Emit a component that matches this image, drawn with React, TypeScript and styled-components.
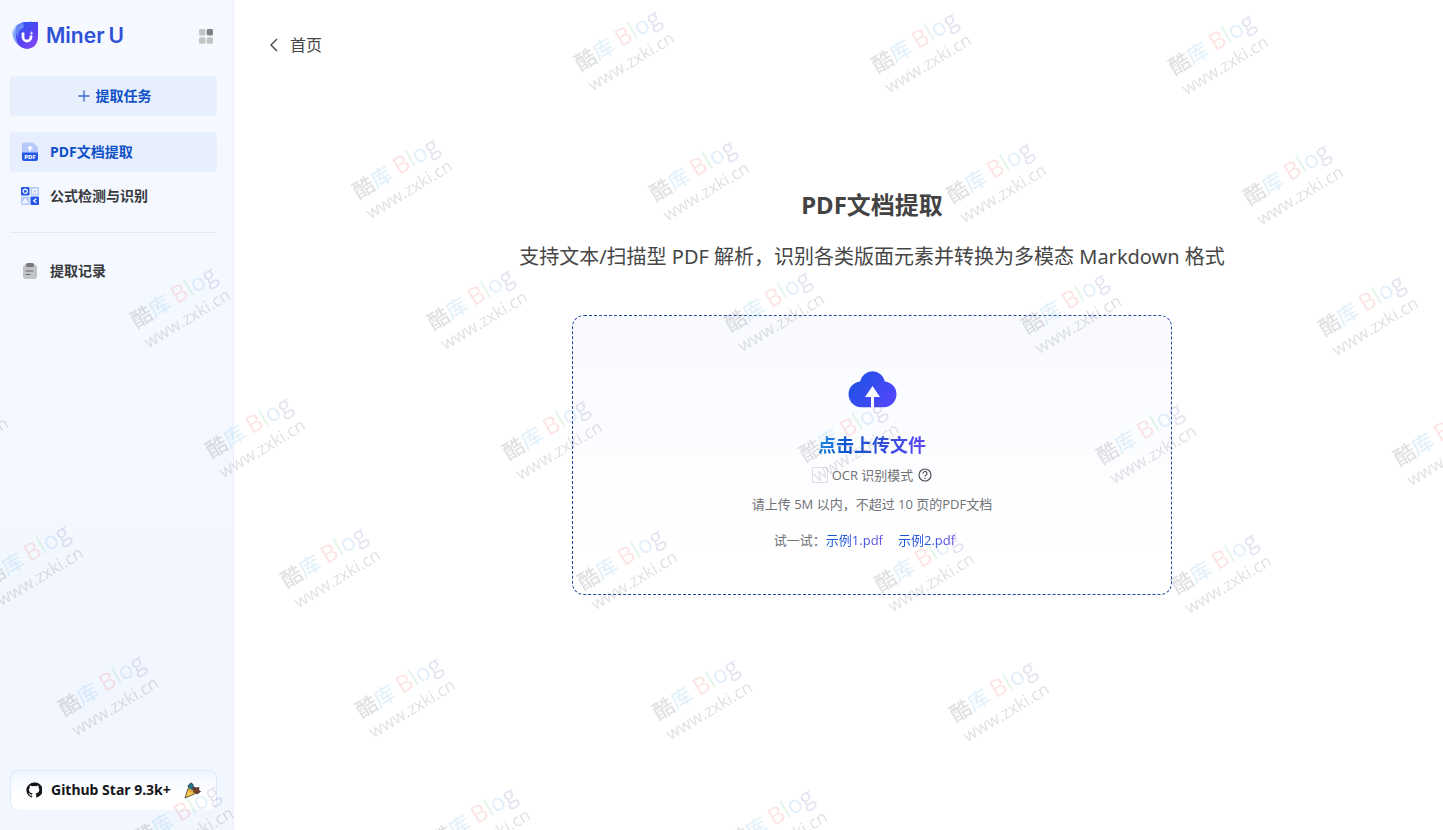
import React from "react";
import styled, { createGlobalStyle, css } from "styled-components";

const GlobalStyle = createGlobalStyle`
  *, *::before, *::after { box-sizing: border-box; }
  body {
    margin: 0;
    background: #fff;
    color: #464646;
    font-family: "Noto Sans", "Noto Sans CJK SC", sans-serif;
    font-size: 14px;
    line-height: 20px;
  }
  button { font: inherit; border: 0; background: none; padding: 0; cursor: pointer; }
  a { text-decoration: none; }
`;

const Page = styled.div`
  position: relative;
  display: flex;
  min-height: 100vh;
  overflow: hidden;
`;

const Sidebar = styled.aside`
  flex: 0 0 234px;
  display: flex;
  flex-direction: column;
  padding: 16px 16px 20px 10px;
  border-right: 1px solid #e9eef7;
  background: linear-gradient(180deg, #f6f9ff 0%, #f4f9ff 45%, #f1f6ff 100%);
`;

const Brand = styled.header`
  display: flex;
  align-items: center;
  height: 40px;
  margin-bottom: 20px;
  padding: 0 2px;
`;

const BrandName = styled.span`
  display: flex;
  flex: 1;
  gap: 4px;
  margin-left: 7px;
  font-family: Inter, "Noto Sans", sans-serif;
  font-size: 21px;
  line-height: 30px;
  font-weight: 600;
  color: #2f50d8;
`;

const GridButton = styled.button`
  display: flex;
  width: 18px;
  height: 18px;
  align-items: center;
  justify-content: center;
`;

const NewTask = styled.button`
  display: flex;
  align-items: center;
  justify-content: center;
  gap: 6px;
  height: 40px;
  margin-bottom: 16px;
  padding-left: 2px;
  border-radius: 4px;
  background: #e8effc;
  color: #1151c8;
  font-weight: 700;
`;

const Nav = styled.nav`
  display: flex;
  flex-direction: column;
  gap: 4px;
`;

const NavItem = styled.a<{ $active?: boolean }>`
  display: flex;
  align-items: center;
  gap: 10px;
  height: 40px;
  padding: 0 10px;
  border-radius: 4px;
  color: #383a3e;
  font-weight: 700;
  ${(p) =>
    p.$active &&
    css`
      background: #e7eefd;
      color: #1151c8;
    `}
`;

const Divider = styled.hr`
  width: 100%;
  margin: 16px 0 18px;
  border: 0;
  border-top: 1px solid #e2e8f5;
`;

const GithubLink = styled.a`
  display: flex;
  align-items: center;
  height: 40px;
  margin-top: auto;
  padding: 0 15px;
  border: 1px solid #dbe9fb;
  border-bottom-color: #f8fbff;
  border-radius: 8px;
  background: linear-gradient(180deg, #f0f6ff 0%, #fff 60%);
  color: #14161a;
  font-weight: 700;
`;

const GithubText = styled.span`
  flex: 1;
  margin-left: 9px;
  white-space: nowrap;
`;

const Main = styled.main`
  flex: 1;
  min-width: 0;
  padding: 32px 0 0 33px;
`;

const BackLink = styled.a`
  display: inline-flex;
  align-items: center;
  gap: 8px;
  height: 26px;
  color: #464646;
  font-size: 16px;
`;

const Content = styled.section`
  display: flex;
  flex-direction: column;
  align-items: center;
  margin-left: 34px;
  padding-top: 129px;
`;

const Title = styled.h1`
  margin: 0 0 20px;
  color: #434343;
  font-size: 24px;
  line-height: 36px;
  font-weight: 700;
`;

const Subtitle = styled.p`
  margin: 0 0 44px;
  color: #464646;
  font-size: 20px;
  line-height: 28px;
`;

const DropZone = styled.div`
  display: flex;
  flex-direction: column;
  align-items: center;
  width: 600px;
  max-width: 100%;
  height: 280px;
  padding-top: 54px;
  border: 1px dashed #1f4c9f;
  border-radius: 12px;
  background: linear-gradient(180deg, #f8faff 0%, #fff 85%);
  font-family: "Open Sans", "Noto Sans CJK SC", sans-serif;
  font-size: 13px;
  color: #717275;
`;

const UploadButton = styled.button`
  display: flex;
  flex-direction: column;
  align-items: center;
  gap: 22px;
`;

const UploadLabel = styled.span`
  font-size: 18px;
  line-height: 28px;
  font-weight: 700;
  background: linear-gradient(90deg, #1a80e0 0%, #0d53cf 28%, #2a4fdc 55%, #6048f5 100%);
  background-clip: text;
  color: transparent;
`;

const OcrRow = styled.div`
  display: flex;
  align-items: center;
  gap: 5px;
  height: 32px;
  margin-bottom: 3px;
`;

const OcrLabel = styled.label`
  display: flex;
  align-items: center;
  gap: 4px;
`;

const Checkbox = styled.input`
  appearance: none;
  width: 16px;
  height: 16px;
  margin: 0;
  border: 1px solid #dcdee3;
  border-radius: 1px;
  background: transparent;
`;

const HelpButton = styled.button`
  display: flex;
`;

const Hint = styled.p`
  margin: 0 0 16px;
`;

const Samples = styled.div`
  display: flex;
  align-items: center;
`;

const SampleLink = styled.a`
  margin-right: 15px;
  background: linear-gradient(90deg, #0d5bd4 0%, #2b50da 50%, #6a4ce8 100%);
  background-clip: text;
  color: transparent;
`;

const WatermarkLayer = styled.div`
  position: absolute;
  inset: 0;
  overflow: hidden;
  pointer-events: none;
  user-select: none;
`;

const Stamp = styled.div`
  position: absolute;
  width: max-content;
  transform: translate(-50%, -50%) rotate(-31deg);
  opacity: 0.18;
  color: #555a60;
  font-family: "Open Sans", "Noto Sans CJK SC", sans-serif;
  white-space: nowrap;
`;

const StampName = styled.div`
  display: flex;
  align-items: baseline;
  font-size: 21px;
  line-height: 30px;
  font-weight: 500;
`;

const StampLatin = styled.span`
  margin-left: 5px;
  font-size: 24px;
`;

const StampSite = styled.div`
  font-size: 17px;
  line-height: 20px;
`;

const Ink = styled.span<{ $color: string }>`
  color: ${(p) => p.$color};
`;

const LogoMark = () => (
  <svg width="27" height="30" viewBox="0 0 27 30" aria-hidden="true">
    <defs>
      <linearGradient id="logo" x1="4" y1="4" x2="24" y2="28" gradientUnits="userSpaceOnUse">
        <stop offset="0" stopColor="#2f5cf0" />
        <stop offset="0.5" stopColor="#5343f4" />
        <stop offset="1" stopColor="#8b49fa" />
      </linearGradient>
    </defs>
    <path d="M0 11 4 4 12 2 20 0v14q0 9-7 12Q2 26 0 11Z" fill="#a9c4fb" />
    <path d="M1 14 5 4 20 1l3 4-3 19-7 3Q3 24 1 14Z" fill="#7396f7" opacity=".8" />
    <path d="M4 9q1-7 8-8h14v14q0 12-11 13Q4 27 4 14Z" fill="url(#logo)" />
    <path d="M4 9Q5 3 11 2l1 4-5 4-1 6Q4 14 4 9Z" fill="#7ba0fa" opacity=".7" />
    <path d="M11 11.500v4.500a4 4 0 0 0 8 0v-1.500" fill="none" stroke="#fff" strokeWidth="2.800" />
    <path d="m19.500 10 .7 1.500 1.500.7-1.500.7-.7 1.500-.7-1.500-1.500-.7 1.500-.7Z" fill="#d9ceff" />
  </svg>
);

const GridIcon = () => (
  <svg width="14" height="15" viewBox="0 0 14 15" aria-hidden="true">
    <rect width="6.500" height="6.500" rx="1.500" fill="#c3c4c6" />
    <rect x="7.700" width="6.300" height="6.500" rx="1.500" fill="#7e8084" />
    <rect y="8.300" width="6.500" height="6.500" rx="1.500" fill="#c3c4c6" />
    <rect x="7.700" y="8.300" width="6.300" height="6.500" rx="1.500" fill="#c3c4c6" />
  </svg>
);

const PlusIcon = () => (
  <svg width="12" height="12" viewBox="0 0 12 12" aria-hidden="true">
    <path d="M6 .5v11M.5 6h11" stroke="#3d69c9" strokeWidth="1.300" />
  </svg>
);

const PdfIcon = () => (
  <svg width="20" height="20" viewBox="0 0 20 20" aria-hidden="true">
    <path d="M4 .5h9l5 5V13H2V2.500Q2 .5 4 .5Z" fill="#b5c9fd" />
    <path d="M10 3.500 7.200 6.700h1.900v2.300h1.800V6.700h1.900Z" fill="#fff" />
    <path d="M2 10.500h16V17q0 2-2 2H4q-2 0-2-2Z" fill="#2457e6" />
    <text x="10" y="17" textAnchor="middle" fontFamily="Noto Sans" fontWeight="800" fontSize="6" fill="#fff">
      PDF
    </text>
  </svg>
);

const FormulaIcon = () => (
  <svg width="20" height="20" viewBox="0 0 20 20" aria-hidden="true">
    <rect x="1" y="1" width="8.500" height="8.500" rx="1" fill="#2457e6" />
    <rect x="10.500" y="1" width="8.500" height="8.500" rx="1" fill="#b9cbfc" />
    <rect x="1" y="10.500" width="8.500" height="8.500" rx="1" fill="#b9cbfc" />
    <rect x="10.500" y="10.500" width="8.500" height="8.500" rx="1" fill="#2457e6" />
    <g fill="none" stroke="#fff" strokeWidth="1.200">
      <circle cx="5.200" cy="5.200" r="2.100" />
      <rect x="12.900" y="3.400" width="3.800" height="3.800" />
      <path d="M5.200 13.200 7.300 16.700H3.100Z" />
      <path d="m16.300 12.700-2.600 2 2.600 2" />
    </g>
  </svg>
);

const RecordIcon = () => (
  <svg width="20" height="20" viewBox="0 0 20 20" aria-hidden="true">
    <rect x="3" y="3.500" width="14" height="14.500" rx="3" fill="#c1c3c7" />
    <rect x="6" y="2" width="8" height="4" rx="1.500" fill="#77797e" />
    <path d="M6 10h7M6 13.500h4" stroke="#686b71" strokeWidth="1.200" strokeLinecap="round" />
  </svg>
);

const GithubIcon = () => (
  <svg width="16" height="16" viewBox="0 0 24 24" fill="#14161a" aria-hidden="true">
    <path d="M12 .8a11.500 11.500 0 0 0-3.600 22.400c.6.1.8-.3.8-.6v-2c-3.300.7-4-1.600-4-1.600-.5-1.300-1.300-1.700-1.300-1.700-1-.7.1-.7.1-.7 1.200.1 1.800 1.200 1.800 1.200 1 1.800 2.800 1.300 3.400 1 .1-.8.4-1.300.8-1.600-2.700-.3-5.500-1.300-5.500-5.800 0-1.200.5-2.300 1.300-3.100-.2-.4-.6-1.600 0-3.200 0 0 1-.3 3.400 1.200a11.500 11.500 0 0 1 6 0c2.300-1.500 3.300-1.200 3.300-1.200.7 1.600.2 2.800.1 3.200.8.8 1.300 1.900 1.300 3.100 0 4.500-2.800 5.500-5.500 5.800.5.400.9 1.100.9 2.300v3.300c0 .3.100.7.800.6A11.500 11.500 0 0 0 12 .8Z" />
  </svg>
);

const PopperIcon = () => (
  <svg width="17" height="17" viewBox="0 0 17 17" aria-hidden="true">
    <path d="M4 6.500 10.500 12 1 16Z" fill="#f6c651" stroke="#40362c" strokeWidth=".8" strokeLinejoin="round" />
    <path d="M4 5 4.500 3 7 .8l2 1.700.5 3.500L7 7.500Z" fill="#22798f" stroke="#273640" strokeWidth=".8" />
    <path d="M8.500 7.500 10 5l2 1 3-.5-.5 2.500 2 1.500-3.500 2.500-3-1.500Z" fill="#74412c" stroke="#392821" strokeWidth=".8" />
    <path d="M4 6.500Q9 7 10.500 12 6 11 4 6.500Z" fill="#e0a638" />
  </svg>
);

const ChevronIcon = () => (
  <svg width="15" height="16" viewBox="0 0 15 16" fill="none" aria-hidden="true">
    <path d="M10 2 4 8l6 6" stroke="#464646" strokeWidth="1.400" />
  </svg>
);

const CloudIcon = () => (
  <svg width="49" height="39" viewBox="0 0 49 39" aria-hidden="true">
    <defs>
      <linearGradient id="cloud" x1="4" y1="4" x2="46" y2="36" gradientUnits="userSpaceOnUse">
        <stop offset="0.150" stopColor="#2450e6" />
        <stop offset="0.850" stopColor="#4d46fb" />
      </linearGradient>
    </defs>
    <path
      d="M12 11.400A12.800 12.800 0 0 1 37 11.400 13 13 0 0 1 36 37.300H26V27H32L24.500 16 17 27h6v10.300H13A13 13 0 0 1 12 11.400Z"
      fill="url(#cloud)"
    />
  </svg>
);

const HelpIcon = () => (
  <svg width="14" height="14" viewBox="0 0 14 14" fill="none" stroke="#4f5155" strokeWidth="1.200" aria-hidden="true">
    <circle cx="7" cy="7" r="6" />
    <path d="M5 5.600a2 2 0 1 1 3 1.600q-1 .5-1 1.400" />
    <path d="M7 9.800v1.100" />
  </svg>
);

/* Each row lists the first stamp's centre and how many stamps follow it to the right. */
const STAMP_STEP = { x: 297, y: 2 };
const STAMP_ROWS = [
  { x: 623, y: 48, count: 3 },
  { x: 401, y: 176, count: 4 },
  { x: 179, y: 305, count: 5 },
  { x: -43, y: 433, count: 6 },
  { x: 32, y: 563, count: 5 },
  { x: 107, y: 693, count: 4 },
  { x: 182, y: 823, count: 3 },
];
const STAMPS = STAMP_ROWS.flatMap((row) =>
  Array.from({ length: row.count }, (_, i) => ({
    left: row.x + i * STAMP_STEP.x,
    top: row.y + i * STAMP_STEP.y,
  }))
);

const Watermark = () => (
  <WatermarkLayer aria-hidden="true">
    {STAMPS.map((pos) => (
      <Stamp key={`${pos.left}-${pos.top}`} style={pos}>
        <StampName>
          酷<Ink $color="#6bbbe8">库</Ink>
          <StampLatin>
            <Ink $color="#f0706c">B</Ink>
            <Ink $color="#66cf88">l</Ink>
            <Ink $color="#66aae6">o</Ink>
            <Ink $color="#7169b5">g</Ink>
          </StampLatin>
        </StampName>
        <StampSite>www.zxki.cn</StampSite>
      </Stamp>
    ))}
  </WatermarkLayer>
);

export default function App() {
  return (
    <Page>
      <GlobalStyle />
      <Sidebar>
        <Brand>
          <LogoMark />
          <BrandName>
            <span>Miner</span>
            <span>U</span>
          </BrandName>
          <GridButton type="button" aria-label="Apps">
            <GridIcon />
          </GridButton>
        </Brand>
        <NewTask type="button">
          <PlusIcon />
          提取任务
        </NewTask>
        <Nav>
          <NavItem href="#pdf" $active aria-current="page">
            <PdfIcon />
            PDF文档提取
          </NavItem>
          <NavItem href="#formula">
            <FormulaIcon />
            公式检测与识别
          </NavItem>
        </Nav>
        <Divider />
        <NavItem href="#history">
          <RecordIcon />
          提取记录
        </NavItem>
        <GithubLink href="#github">
          <GithubIcon />
          <GithubText>Github Star 9.3k+</GithubText>
          <PopperIcon />
        </GithubLink>
      </Sidebar>
      <Main>
        <BackLink href="#home">
          <ChevronIcon />
          首页
        </BackLink>
        <Content>
          <Title>PDF文档提取</Title>
          <Subtitle>支持文本/扫描型 PDF 解析，识别各类版面元素并转换为多模态 Markdown 格式</Subtitle>
          <DropZone>
            <UploadButton type="button">
              <CloudIcon />
              <UploadLabel>点击上传文件</UploadLabel>
            </UploadButton>
            <OcrRow>
              <OcrLabel>
                <Checkbox type="checkbox" />
                OCR 识别模式
              </OcrLabel>
              <HelpButton type="button" aria-label="OCR help">
                <HelpIcon />
              </HelpButton>
            </OcrRow>
            <Hint>请上传 5M 以内，不超过 10 页的PDF文档</Hint>
            <Samples>
              试一试：
              <SampleLink href="#sample-1">示例1.pdf</SampleLink>
              <SampleLink href="#sample-2">示例2.pdf</SampleLink>
            </Samples>
          </DropZone>
        </Content>
      </Main>
      <Watermark />
    </Page>
  );
}
